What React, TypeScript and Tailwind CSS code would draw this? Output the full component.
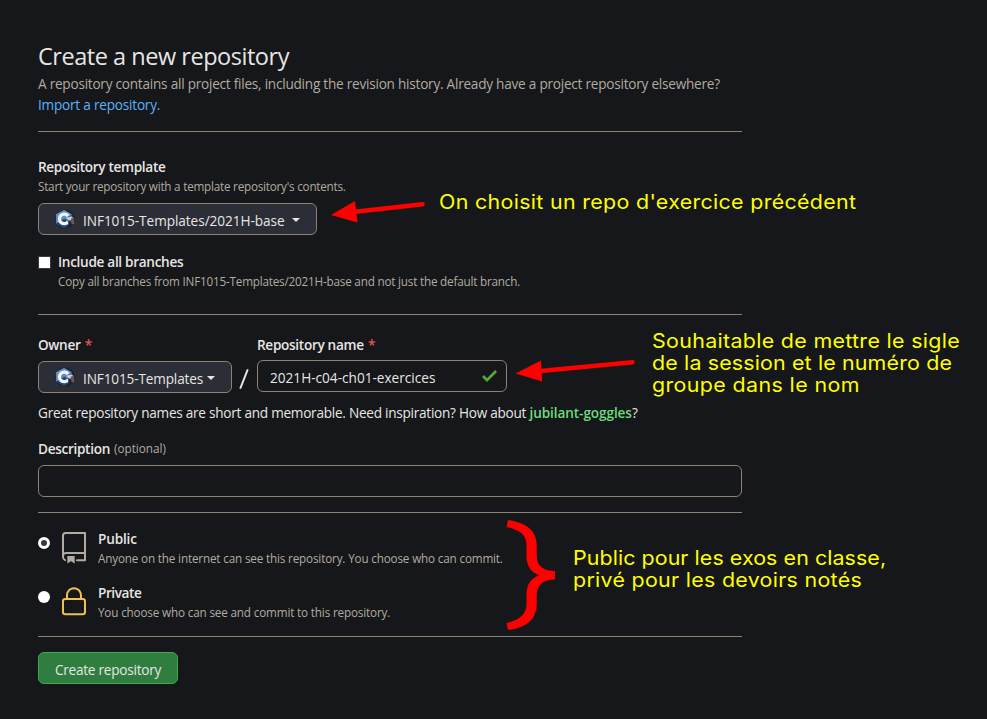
function OrgAvatar() {
  return (
    <svg width="20" height="20" viewBox="0 0 20 20" className="shrink-0">
      <circle cx="10" cy="10" r="9.8" fill="#20242f" />
      <path d="M9 1 L16.6 5.2 V14.6 L9 18.8 L1.2 14.6 V5.2 Z" fill="#3f6fae" />
      <path d="M9 1 L16.6 5.2 L1.2 14.6 V5.2 Z" fill="#5f8fc9" />
      <path d="M1.2 14.6 L9 10 L16.6 14.6 L9 18.8 Z" fill="#1f4580" />
      <path d="M13.2 7.2 A4.8 4.8 0 1 0 13.2 12.6" fill="none" stroke="#f1f3f5" strokeWidth="3.2" />
      <path d="M10.5 8.8 L16.8 7.6 L18.8 9.5 L14 11.4 Z" fill="#d2cdc9" />
      <path d="M16.2 9 H18.6 L19.4 15 L17 15.6 Z" fill="#7b5540" />
      <path d="M13 12.4 L15.6 12 L16 15 L14 16.4 Z" fill="#1a2233" />
    </svg>
  );
}

function Caret() {
  return <span className="border-x-4 border-t-4 border-x-transparent border-t-[#e8e6e3]" />;
}

function Rule({ className }: { className: string }) {
  return <div className={`h-px bg-[#8c8273] ${className}`} />;
}

const body = "text-[13.6px] whitespace-nowrap";
const small = "h-5 text-[11.7px] leading-[18px] whitespace-nowrap text-[#b2aba1]";
const bold = "text-[13.6px] font-semibold whitespace-nowrap";
const note =
  "absolute origin-left scale-x-[1.07] whitespace-nowrap font-['Inter',sans-serif] text-[20px] leading-[22px] text-[#ffff00]";

export default function App() {
  return (
    <div className="relative h-[719px] w-[987px] overflow-hidden bg-[#15171a] font-['Open_Sans',sans-serif] leading-5 text-[#e8e6e3]">
      <main className="flex w-[742px] flex-col pt-[41px] pl-[38px]">
        <h1 className="h-8 text-[23.5px] leading-[30px] tracking-[-0.47px]">Create a new repository</h1>
        <div className="text-[13.6px] leading-[21px] whitespace-nowrap">
          <p className="tracking-[-0.237px] text-[#b2aba1]">
            A repository contains all project files, including the revision history. Already have a project repository elsewhere?
          </p>
          <a className="block tracking-[-0.216px] text-[#5eb2f7]">Import a repository.</a>
        </div>
        <Rule className="mt-4" />

        <div className={`mt-[25px] tracking-[-0.32px] ${bold}`}>Repository template</div>
        <div className={`tracking-[-0.225px] ${small}`}>Start your repository with a template repository's contents.</div>
        <button className="mt-1.5 flex h-8 w-[279px] items-center rounded-md border border-[#8c8273] bg-[#2b2e36] pl-4">
          <OrgAvatar />
          <span className={`mt-[3px] ml-2 w-[209px] text-left tracking-[-0.05px] ${body}`}>INF1015-Templates/2021H-base</span>
          <span className="mt-0.5 flex">
            <Caret />
          </span>
        </button>

        <div className="mt-[17px] flex items-center">
          <span className="size-[13px] border border-[#3a3a3a] bg-white" />
          <span className={`ml-[7px] tracking-[-0.31px] ${bold}`}>Include all branches</span>
        </div>
        <div className={`pl-5 tracking-[-0.195px] ${small}`}>Copy all branches from INF1015-Templates/2021H-base and not just the default branch.</div>
        <Rule className="mt-[22px]" />

        <div className="mt-5 flex">
          <div className={`w-[219px] tracking-[-0.33px] ${bold}`}>
            Owner <span className="ml-px text-[#e5534b]">*</span>
          </div>
          <div className={`tracking-[-0.31px] ${bold}`}>
            Repository name <span className="ml-px text-[#e5534b]">*</span>
          </div>
        </div>
        <div className="mt-[5px] flex h-[33px]">
          <button className="mt-px flex h-8 w-[194px] items-center rounded-md border border-[#8c8273] bg-[#2b2e36] pl-4">
            <OrgAvatar />
            <span className={`mt-[3px] ml-2 w-[124px] text-left tracking-[-0.14px] ${body}`}>INF1015-Templates</span>
            <span className="mt-0.5 flex">
              <Caret />
            </span>
          </button>
          <div className="flex w-[25px] items-center justify-center pt-1 pr-0.5">
            <svg width="10" height="20" viewBox="0 0 10 20">
              <path d="M8.8 0.3 L1.2 19.7" stroke="#e8e6e3" strokeWidth="1.9" />
            </svg>
          </div>
          <div className="flex h-8 w-[250px] items-center justify-between rounded-md border border-[#8c8273] pr-[9px] pl-3">
            <span className={`mt-[3px] tracking-[0.01px] ${body}`}>2021H-c04-ch01-exercices</span>
            <svg width="15" height="12" viewBox="0 3.5 12 9.5">
              <path d="M12 5l-8 8-4-4 1.5-1.5L4 10l6.5-6.5L12 5z" fill="#56a838" />
            </svg>
          </div>
        </div>
        <p className={`mt-2.5 tracking-[-0.255px] ${body}`}>
          Great repository names are short and memorable. Need inspiration? How about{" "}
          <span className="font-semibold tracking-[-0.09px] text-[#6bdc7c]">jubilant-goggles</span>?
        </p>

        <div className="mt-4 flex">
          <span className={`w-[76px] tracking-[-0.31px] ${bold}`}>Description</span>
          <span className={`tracking-[0.01px] ${small}`}>(optional)</span>
        </div>
        <div className="mt-1.5 h-8 rounded-md border border-[#8c8273]" />
        <Rule className="mt-[15px]" />

        <div className="mt-4 flex h-10">
          <span className="mt-[7.5px] ml-[0.4px] mr-[0.6px] size-3 rounded-full border-[3px] border-white bg-[#3a3a3a]" />
          <svg width="32" height="32" viewBox="0 0 24 24" fill="#b2aba1" className="mt-[3px] ml-[7px]">
            <path
              fillRule="evenodd"
              d="M3 2.75A2.75 2.75 0 015.75 0h14.5a.75.75 0 01.75.75v20.5a.75.75 0 01-.75.75h-6a.75.75 0 010-1.5h5.25v-4H6A1.5 1.5 0 004.5 18v.75c0 .716.43 1.334 1.05 1.605a.75.75 0 01-.6 1.374A3.25 3.25 0 013 18.75v-16zM19.5 1.5V15H6c-.546 0-1.059.146-1.5.401V2.75c0-.69.56-1.25 1.25-1.25H19.5z"
            />
            <path d="M7 18.25a.25.25 0 01.25-.25h5a.25.25 0 01.25.25v5.01a.25.25 0 01-.397.201l-2.206-1.604a.25.25 0 00-.294 0L7.397 23.46a.25.25 0 01-.397-.2v-5.01z" />
          </svg>
          <div className="ml-2">
            <div className={`tracking-[-0.17px] ${bold}`}>Public</div>
            <div className={`tracking-[-0.16px] ${small}`}>Anyone on the internet can see this repository. You choose who can commit.</div>
          </div>
        </div>
        <div className="mt-3.5 flex h-10">
          <span className="mt-[7.5px] ml-[0.4px] mr-[0.6px] size-3 rounded-full bg-white" />
          <svg width="32" height="32" viewBox="0 0 24 24" fill="#f0c14b" className="mt-[3px] ml-[7px]">
            <path
              fillRule="evenodd"
              d="M6 9V7.25C6 3.845 8.503 1 12 1s6 2.845 6 6.25V9h.5a2.5 2.5 0 012.5 2.5v8a2.5 2.5 0 01-2.5 2.5h-13A2.5 2.5 0 013 19.5v-8A2.5 2.5 0 015.5 9H6zm1.5-1.75C7.5 4.58 9.422 2.5 12 2.5c2.578 0 4.5 2.08 4.5 4.75V9h-9V7.25zm-3 4.25a1 1 0 011-1h13a1 1 0 011 1v8a1 1 0 01-1 1h-13a1 1 0 01-1-1v-8z"
            />
          </svg>
          <div className="ml-2">
            <div className={`tracking-[-0.43px] ${bold}`}>Private</div>
            <div className={`tracking-[-0.155px] ${small}`}>You choose who can see and commit to this repository.</div>
          </div>
        </div>
        <Rule className="mt-[13px]" />
        <button className={`mt-[15px] flex h-8 w-[140px] items-center justify-center rounded-md border border-[#3daa4f] bg-[#2f7d3f] pt-[3px] tracking-[-0.25px] ${body}`}>
          Create repository
        </button>
      </main>

      {/* Hand-drawn style annotations laid over the form */}
      <svg className="absolute top-0 left-0" width="987" height="719" viewBox="0 0 987 719" fill="#ff0000">
        <path d="M331 215 L355 201 L357.5 222.5 Z" />
        <path d="M353 212 L422.5 204.2" stroke="#ff0000" strokeWidth="4.6" strokeLinecap="round" />
        <path d="M515.5 373.5 L541 360.5 L542.3 381.5 Z" />
        <path d="M538 371.3 L632.5 362.3" stroke="#ff0000" strokeWidth="4.6" strokeLinecap="round" />
        <path d="M508 520 C526 523 536.5 530 536.7 545 V555 C536.7 565 542 571 555 571 V579.5 C542 579.5 536.7 586 536.7 596 V604 C536.5 620 526 628 508 630 L506.5 623 C520 620 526.5 614 526.5 604 V595 C526.5 585 530 579 539 575.3 C530 571.5 526.5 565 526.5 556 V545 C526.5 535 520 530 506.5 527 Z" />
      </svg>
      <div className={`top-[191px] left-[439px] tracking-[0.3px] ${note}`}>On choisit un repo d'exercice précédent</div>
      <div className={`top-[330px] left-[652px] ${note}`}>
        <div className="tracking-[0.3px]">Souhaitable de mettre le sigle</div>
        <div className="tracking-[0.14px]">de la session et le numéro de</div>
        <div className="tracking-[0.36px]">groupe dans le nom</div>
      </div>
      <div className={`top-[547px] left-[573px] ${note}`}>
        <div className="tracking-[0.07px]">Public pour les exos en classe,</div>
        <div className="tracking-[0.28px]">privé pour les devoirs notés</div>
      </div>
    </div>
  );
}
